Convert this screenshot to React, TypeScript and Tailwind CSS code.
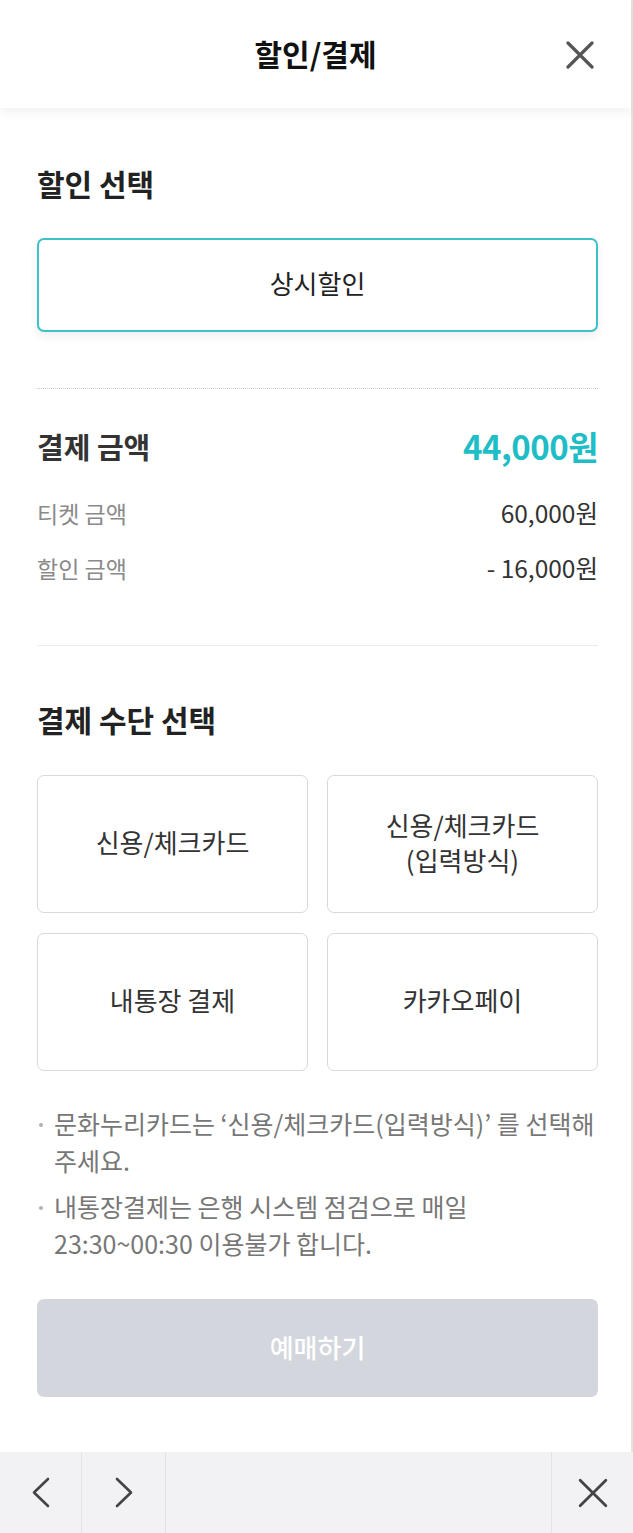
import React from "react";

function CloseIcon({ size = 28, stroke = 3.2, color = "#555" }: { size?: number; stroke?: number; color?: string }) {
  return (
    <svg width={size} height={size} viewBox="0 0 28 28" fill="none">
      <path d="M2 2 L26 26 M26 2 L2 26" stroke={color} strokeWidth={stroke} strokeLinecap="round" />
    </svg>
  );
}

function Chevron({ dir }: { dir: "left" | "right" }) {
  return (
    <svg width="18" height="31" viewBox="0 0 18 31" fill="none">
      <path
        d={dir === "left" ? "M16 2 L2 15.5 L16 29" : "M2 2 L16 15.5 L2 29"}
        stroke="#444"
        strokeWidth="2.6"
        strokeLinecap="round"
        strokeLinejoin="round"
      />
    </svg>
  );
}

export default function App() {
  const methods: React.ReactNode[] = [
    "신용/체크카드",
    <>
      신용/체크카드
      <br />
      (입력방식)
    </>,
    "내통장 결제",
    "카카오페이",
  ];
  return (
    <div className="w-[633px] min-h-[1533px] flex flex-col bg-white font-['Noto_Sans_CJK_KR','Noto_Sans',sans-serif]">
      <div className="flex-1 border-r-2 border-[#e2e2e2]">
        <header className="relative h-[108px] flex items-center justify-center bg-white shadow-[0_5px_9px_rgba(0,0,0,0.05)]">
          <h1 className="text-[30px] font-bold text-[#111] leading-none pb-[2px]">할인/결제</h1>
          <button className="absolute right-[37px] top-[41px]">
            <CloseIcon />
          </button>
        </header>

        <main className="pl-[37px] pr-[33px]">
          <h2 className="mt-[57px] text-[30px] leading-[36px] font-bold text-[#222]">할인 선택</h2>
          <button className="mt-[37px] w-full h-[94px] rounded-[7px] border-2 border-[#3cc2c8] bg-white flex items-center justify-center pb-[5px] text-[26px] text-[#222] shadow-[0_4px_10px_rgba(0,0,0,0.07)]">
            상시할인
          </button>

          <div className="mt-[56px] border-t border-dotted border-[#c8c8c8]" />

          <div className="mt-[38px] h-[40px] flex items-center justify-between">
            <span className="text-[29px] font-bold text-[#333]">결제 금액</span>
            <span className="text-[33px] font-bold text-[#1fbdc5] tracking-[-0.5px]">44,000원</span>
          </div>
          <div className="mt-[31px] h-[30px] flex items-center justify-between">
            <span className="text-[23px] text-[#8a8a8a]">티켓 금액</span>
            <span className="text-[24.5px] text-[#333]">60,000원</span>
          </div>
          <div className="mt-[25px] h-[30px] flex items-center justify-between">
            <span className="text-[23px] text-[#8a8a8a]">할인 금액</span>
            <span className="text-[24.5px] text-[#333]">- 16,000원</span>
          </div>

          <div className="mt-[62px] border-t border-[#ececec]" />

          <h2 className="mt-[55px] text-[30px] leading-[36px] font-bold text-[#222]">결제 수단 선택</h2>
          <div className="mt-[38px] grid grid-cols-2 gap-x-[19px] gap-y-[20px]">
            {methods.map((m, i) => (
              <button
                key={i}
                className="h-[138px] rounded-[7px] border border-[#d9d9d9] bg-white flex items-center justify-center pb-[5px] text-center text-[26px] leading-[35px] text-[#333]"
              >
                <span>{m}</span>
              </button>
            ))}
          </div>

          <ul className="mt-[34px] flex flex-col gap-[9px] text-[25px] leading-[37px] text-[#777]">
            <li className="flex">
              <span className="w-[17px] shrink-0">
                <span className="block ml-[2px] mt-[18px] w-[4px] h-[4px] rounded-full bg-[#b0b0b0]" />
              </span>
              <span className="whitespace-nowrap">
                문화누리카드는 ‘신용/체크카드(입력방식)’ 를 선택해
                <br />
                주세요.
              </span>
            </li>
            <li className="flex">
              <span className="w-[17px] shrink-0">
                <span className="block ml-[2px] mt-[18px] w-[4px] h-[4px] rounded-full bg-[#b0b0b0]" />
              </span>
              <span className="whitespace-nowrap">
                내통장결제는 은행 시스템 점검으로 매일
                <br />
                23:30~00:30 이용불가 합니다.
              </span>
            </li>
          </ul>

          <button className="mt-[37px] w-full h-[98px] rounded-[7px] bg-[#d3d6dd] flex items-center justify-center pb-[4px] text-[26px] font-medium text-white">
            예매하기
          </button>
          <div className="h-[54px]" />
        </main>
      </div>

      <nav className="h-[81px] flex bg-[#f2f2f4]">
        <button className="w-[82px] border-r border-[#e3e3e6] flex items-center justify-center">
          <Chevron dir="left" />
        </button>
        <button className="w-[84px] border-r border-[#e3e3e6] flex items-center justify-center">
          <Chevron dir="right" />
        </button>
        <div className="flex-1 border-r border-[#e3e3e6]" />
        <button className="w-[81px] flex items-center justify-center">
          <CloseIcon size={30} stroke={2.6} color="#444" />
        </button>
      </nav>
    </div>
  );
}
